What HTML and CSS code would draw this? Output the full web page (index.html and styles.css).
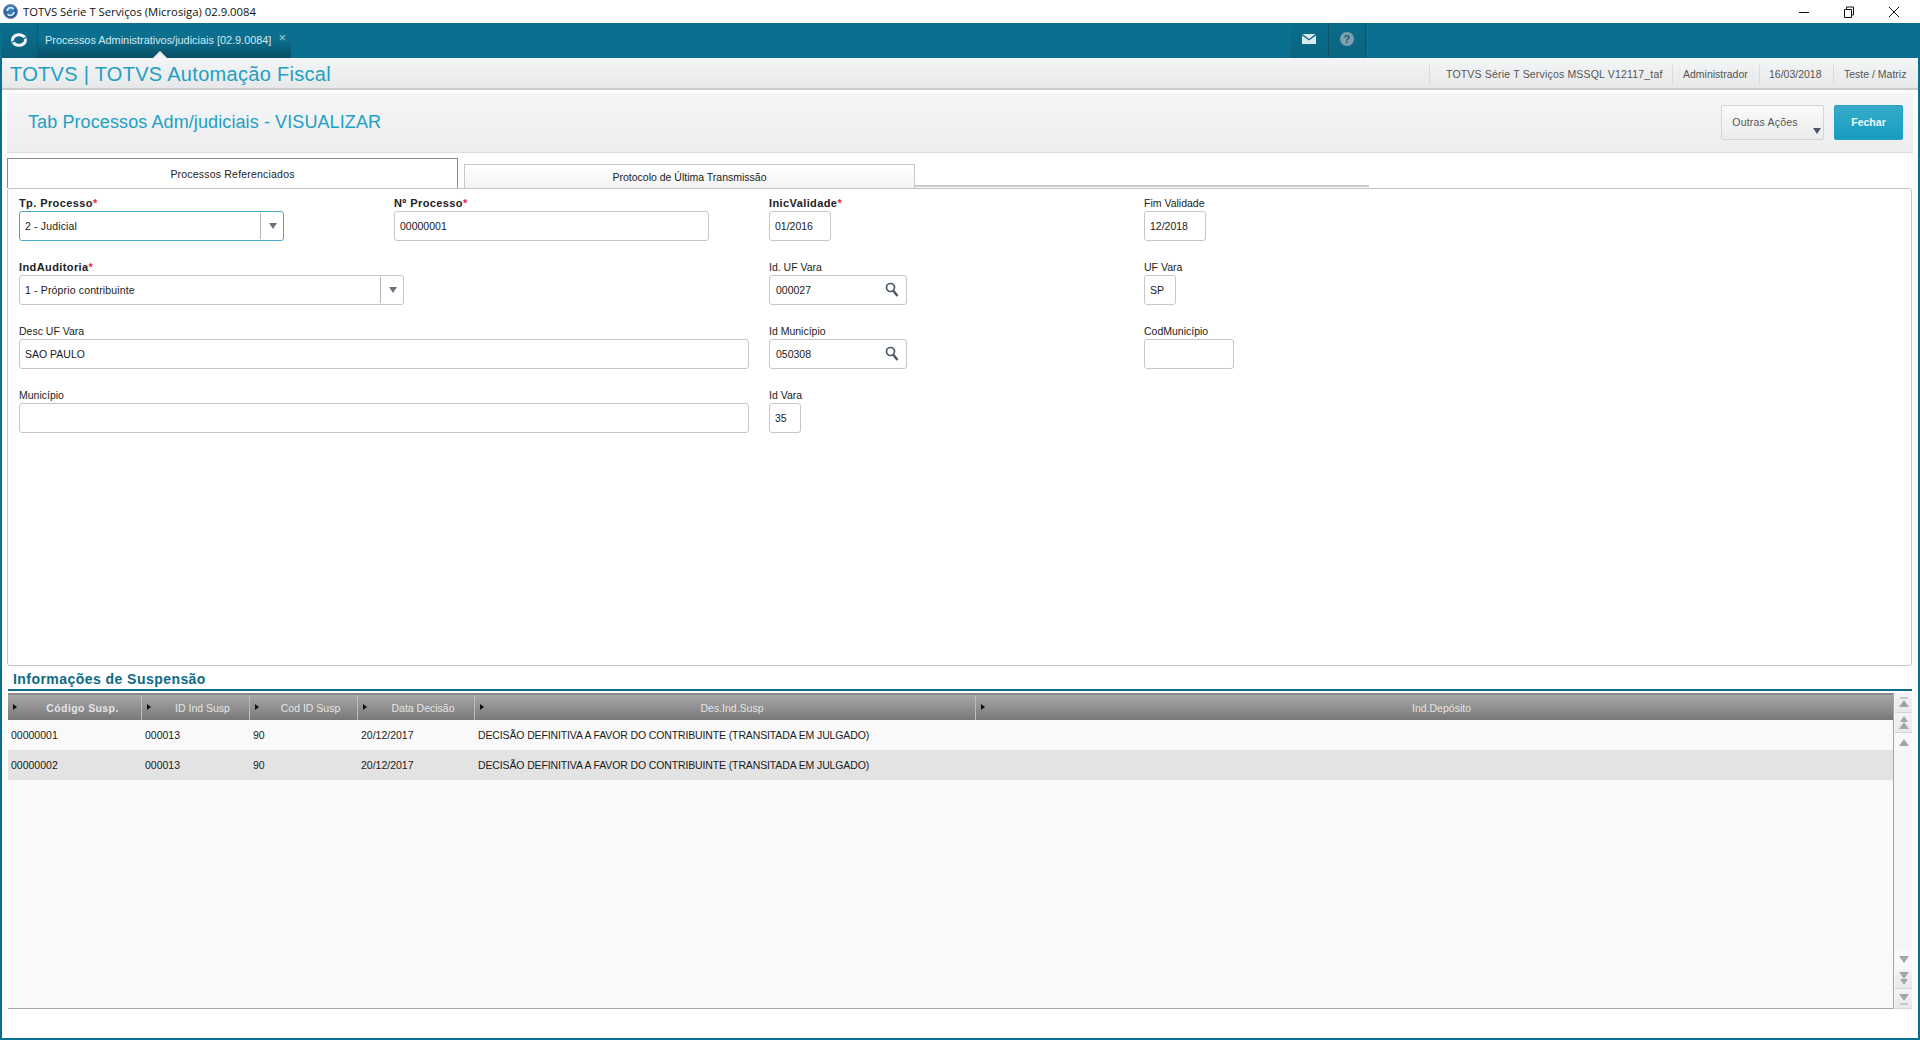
FILE: index.html
```html
<!DOCTYPE html>
<html lang="pt-BR">
<head>
<meta charset="utf-8">
<title>TOTVS Série T Serviços (Microsiga) 02.9.0084</title>
<link rel="stylesheet" href="styles.css">
</head>
<body>
<header class="titlebar">
  <svg class="app-icon" width="15" height="15" viewBox="0 0 15 15"><defs><radialGradient id="ball" cx="50%" cy="35%" r="65%"><stop offset="0" stop-color="#3f8fd0"/><stop offset="1" stop-color="#1d4f86"/></radialGradient></defs><circle cx="7.500" cy="7.500" r="7" fill="url(#ball)" stroke="#7d8ea3"/><path d="M4.200 7a3.500 3.500 0 0 1 6.300-2M10.800 8a3.500 3.500 0 0 1-6.300 2" fill="none" stroke="#d6ecfa" stroke-width="1.800"/></svg>
  <span class="app-title">TOTVS Série T Serviços (Microsiga) 02.9.0084</span>
  <div class="win-controls">
    <svg width="12" height="12" viewBox="0 0 12 12"><path d="M1 6.500h10" stroke="#111" fill="none"/></svg>
    <svg width="12" height="12" viewBox="0 0 12 12"><path d="M1.500 3.500h7v8h-7zM3.500 3.500v-2.500h7v8h-2" stroke="#111" fill="none"/></svg>
    <svg width="12" height="12" viewBox="0 0 12 12"><path d="M1 1l10 10M11 1L1 11" stroke="#111" fill="none"/></svg>
  </div>
</header>
<div class="app">
  <nav class="nav">
    <div class="nav-logo">
      <svg width="16" height="14" viewBox="0 0 16 14"><ellipse cx="8" cy="7" rx="6.500" ry="5.300" fill="none" stroke="#f2f7f9" stroke-width="3"/><path d="M1 9.500C4.500 5 8 9.500 15 4.500" fill="none" stroke="#0b6c8a" stroke-width="1.300"/></svg>
    </div>
    <div class="nav-tab">
      <span>Processos Administrativos/judiciais [02.9.0084]</span>
      <span class="nav-close">×</span>
      <i class="nav-notch"></i>
    </div>
    <div class="nav-spacer"></div>
    <div class="nav-btn"><svg width="14" height="10" viewBox="0 0 14 10"><path d="M.5 0h13L7 5zM0 1.500L7 6.500l7-5V10H0z" fill="#dfeaf0"/></svg></div>
    <div class="nav-btn"><span class="help">?</span></div>
    <div class="nav-end"></div>
  </nav>
  <div class="strip">
    <h1 class="brand">TOTVS | TOTVS Automação Fiscal</h1>
    <ul class="info">
      <li class="info-a">TOTVS Série T Serviços MSSQL V12117_taf</li>
      <li class="info-b">Administrador</li>
      <li class="info-c">16/03/2018</li>
      <li class="info-d">Teste / Matriz</li>
    </ul>
  </div>
  <main class="page">
    <section class="pagehead">
      <h2 class="page-title">Tab Processos Adm/judiciais - VISUALIZAR</h2>
      <div class="actions">
        <button class="btn btn-more">Outras Ações<i class="caret"></i></button>
        <button class="btn btn-primary">Fechar</button>
      </div>
    </section>
    <div class="tabs">
      <div class="tab tab-active">Processos Referenciados</div>
      <div class="tab tab-idle">Protocolo de Última Transmissão</div>
      <div class="tab-line"></div>
    </div>
    <section class="panel">
      <div class="form">
        <div class="field"><label class="req">Tp. Processo<b>*</b></label><div class="input select focus w265"><span>2 - Judicial</span><i class="sel-btn"><i class="caret"></i></i></div></div>
        <div class="field"><label class="req">Nº Processo<b>*</b></label><div class="input w315"><span>00000001</span></div></div>
        <div class="field"><label class="req">InicValidade<b>*</b></label><div class="input w62"><span>01/2016</span></div></div>
        <div class="field"><label>Fim Validade</label><div class="input w62"><span>12/2018</span></div></div>

        <div class="field span2"><label class="req">IndAuditoria<b>*</b></label><div class="input select w385"><span>1 - Próprio contribuinte</span><i class="sel-btn"><i class="caret"></i></i></div></div>
        <div class="field"><label>Id. UF Vara</label><div class="input lookup w138"><span>000027</span><svg width="14" height="15" viewBox="0 0 14 15"><circle cx="5.500" cy="5.500" r="4" fill="none" stroke="#4b5563" stroke-width="1.700"/><path d="M8.500 9l4 5" stroke="#4b5563" stroke-width="2.400"/></svg></div></div>
        <div class="field"><label>UF Vara</label><div class="input w32"><span>SP</span></div></div>

        <div class="field span2"><label>Desc UF Vara</label><div class="input w730"><span>SAO PAULO</span></div></div>
        <div class="field"><label>Id Município</label><div class="input lookup w138"><span>050308</span><svg width="14" height="15" viewBox="0 0 14 15"><circle cx="5.500" cy="5.500" r="4" fill="none" stroke="#4b5563" stroke-width="1.700"/><path d="M8.500 9l4 5" stroke="#4b5563" stroke-width="2.400"/></svg></div></div>
        <div class="field"><label>CodMunicípio</label><div class="input w90"></div></div>

        <div class="field span2"><label>Município</label><div class="input w730"></div></div>
        <div class="field"><label>Id Vara</label><div class="input w32"><span>35</span></div></div>
      </div>
    </section>
    <h3 class="section-title">Informações de Suspensão</h3>
    <section class="browse">
      <div class="grid">
        <div class="row head">
          <div class="th strong"><i class="arrow"></i><span>Código Susp.</span></div>
          <div class="th"><i class="arrow"></i><span>ID Ind Susp</span></div>
          <div class="th"><i class="arrow"></i><span>Cod ID Susp</span></div>
          <div class="th"><i class="arrow"></i><span>Data Decisão</span></div>
          <div class="th"><i class="arrow"></i><span>Des.Ind.Susp</span></div>
          <div class="th"><i class="arrow"></i><span>Ind.Depósito</span></div>
        </div>
        <div class="row body">
          <div>00000001</div><div>000013</div><div>90</div><div>20/12/2017</div><div class="wide">DECISÃO DEFINITIVA A FAVOR DO CONTRIBUINTE (TRANSITADA EM JULGADO)</div><div></div>
        </div>
        <div class="row body alt">
          <div>00000002</div><div>000013</div><div>90</div><div>20/12/2017</div><div class="wide">DECISÃO DEFINITIVA A FAVOR DO CONTRIBUINTE (TRANSITADA EM JULGADO)</div><div></div>
        </div>
      </div>
      <div class="scroll">
        <div class="scroll-group">
          <div class="sb"><svg width="10" height="12" viewBox="0 0 10 12"><path d="M1 1h8" stroke="#a5a5a5"/><path d="M5 3l5 7H0z" fill="#a5a5a5"/></svg></div>
          <div class="sb"><svg width="10" height="13" viewBox="0 0 10 13"><path d="M5 0l4 6H1zM5 6l5 7H0z" fill="#a5a5a5"/></svg></div>
          <div class="sb sb-on"><svg width="10" height="8" viewBox="0 0 10 8"><path d="M5 0l5 7H0z" fill="#a5a5a5"/></svg></div>
        </div>
        <div class="scroll-group">
          <div class="sb sb-on"><svg width="10" height="8" viewBox="0 0 10 8"><path d="M0 1h10L5 8z" fill="#a5a5a5"/></svg></div>
          <div class="sb"><svg width="10" height="13" viewBox="0 0 10 13"><path d="M0 0h10L5 7zM1 7h8l-4 6z" fill="#a5a5a5"/></svg></div>
          <div class="sb"><svg width="10" height="12" viewBox="0 0 10 12"><path d="M0 1h10L5 8z" fill="#a5a5a5"/><path d="M1 11h8" stroke="#a5a5a5"/></svg></div>
        </div>
      </div>
    </section>
  </main>
</div>
</body>
</html>
```
FILE: styles.css
```css
* { box-sizing: border-box; }
html, body { margin: 0; height: 100%; }
body {
  width: 1920px;
  height: 1040px;
  overflow: hidden;
  background: #fff;
  color: #1a1a1a;
  font-family: "Liberation Sans", Arial, sans-serif;
  font-size: 10.5px;
  display: flex;
  flex-direction: column;
}
h1, h2, h3, ul { margin: 0; padding: 0; font-weight: normal; list-style: none; }
i { font-style: normal; display: block; }

/* window title bar */
.titlebar { height: 23px; display: flex; align-items: center; padding-left: 3px; flex: none; }
.app-title { margin-left: 5px; font-family: "Open Sans", sans-serif; font-size: 11.3px; color: #111; }
.win-controls { margin-left: auto; display: flex; gap: 33px; padding-right: 20px; }

/* application frame */
.app {
  height: 1017px;
  display: flex;
  flex-direction: column;
  border: solid #0b708f;
  border-width: 0 2px 2px;
}
.nav { height: 35px; flex: none; display: flex; background: #0b708f; }
.nav-logo {
  width: 36px;
  display: flex; align-items: center; justify-content: center;
  padding: 0 2px 1px 0;
  background: linear-gradient(#0b708f, #0a6079);
  border-right: 1px solid #0a5a72;
}
.nav-tab {
  width: 253px;
  position: relative;
  display: flex; align-items: center;
  padding: 0 0 1px 7px;
  color: #d6e6ec;
  font-size: 10.9px;
  background: linear-gradient(#0b708f 45%, #0a4f66);
}
.nav-close { margin-left: 7px; color: #a9c6d1; font-size: 13px; line-height: 10px; padding-bottom: 5px; }
.nav-notch {
  position: absolute; left: 115px; bottom: 0;
  border: 7px solid transparent; border-top: 0;
  border-bottom-color: #eef0f2;
}
.nav-spacer { flex: 1; }
.nav-btn {
  width: 37.500px;
  display: flex; align-items: center; justify-content: center;
  padding-bottom: 3px;
  background: linear-gradient(#0a6d8a, #0a6580);
  border-right: 1px solid #0c5468;
}
.nav-btn:first-of-type { border-left: 1px solid #0c5f78; }
.help {
  width: 14px; height: 14px; border-radius: 50%;
  background: #7f9fad; color: #0b5f78;
  font: bold 11px/14px "Liberation Sans", sans-serif;
  text-align: center;
}
.nav-end { width: 552px; }

/* system strip */
.strip {
  height: 32px; flex: none;
  display: flex; align-items: center; justify-content: space-between;
  padding-top: 2px;
  background: linear-gradient(#f4f5f6, #e6e8ea);
  border-bottom: 2px solid #c8cacc;
}
.brand { margin-left: 8px; font-size: 20px; color: #1ea0c3; letter-spacing: .3px; }
.info { display: flex; height: 100%; align-items: center; color: #555; font-size: 10.5px; }
.info li { height: 19px; line-height: 19px; border-left: 1px solid #d8dadc; }
.info-a { width: 243px; padding-left: 16px; letter-spacing: .18px; }
.info-b { width: 87px; padding-left: 10px; }
.info-c { width: 74px; padding-left: 9px; }
.info-d { width: 85px; padding-left: 10px; }

/* page */
.page { flex: 1; display: flex; flex-direction: column; padding: 3px 3px 29px 5px; background: #fff; min-height: 0; }
.pagehead {
  height: 60px; flex: none;
  display: flex; align-items: center; justify-content: space-between;
  padding: 0 10px 0 21px;
  margin-right: 2px;
  background: linear-gradient(#f4f5f5, #edeef0);
  border-bottom: 1px solid #dcdcdc;
  border-radius: 3px 3px 0 0;
}
.page-title { font-size: 18px; color: #1ea0c3; letter-spacing: .1px; }
.actions { display: flex; gap: 10px; }
.btn {
  height: 35px;
  font-family: "Liberation Sans", sans-serif; font-size: 10.5px;
  border-radius: 2px; border: 1px solid #d4d4d4; padding: 0 0 2px;
}
.btn-more {
  width: 103px;
  position: relative;
  color: #555;
  background: linear-gradient(#fafafa, #ebeced);
  padding-right: 15px;
  letter-spacing: .2px;
}
.btn-more .caret { position: absolute; right: 2px; bottom: 5px; border-top-color: #4b5563; }
.btn-primary {
  width: 69px;
  color: #f2fafc;
  font-weight: bold;
  border-color: #2aa0c0;
  background: linear-gradient(#38abc9, #169cc0);
}
.caret { width: 0; height: 0; border: 4.500px solid transparent; border-bottom: 0; border-top: 6px solid #6b7280; }

/* tabs */
.tabs { height: 30px; flex: none; margin-top: 5px; display: flex; align-items: flex-end; }
.tab { display: flex; align-items: center; justify-content: center; border: 1px solid; border-bottom: 0; }
.tab-active { width: 451px; height: 30px; background: #fff; border-color: #8a8a8a; color: #222; padding-top: 1px; letter-spacing: .2px; }
.tab-idle {
  width: 451px; height: 24px; margin-left: 6px;
  background: linear-gradient(#fff, #f3f3f3);
  border-color: #c8c8c8; color: #222; padding-top: 1px;
}
.tab-line { width: 454px; height: 2px; margin-bottom: 1px; background: #cbcbcb; }

/* form */
.panel {
  height: 478px; flex: none;
  margin-right: 3px;
  border: 1px solid #c4c4c4;
  border-radius: 3px;
  padding: 6px 0 0 11px;
  background: #fff;
}
.form { display: grid; grid-template-columns: repeat(4, 375px); row-gap: 18px; }
.field { display: flex; flex-direction: column; }
.span2 { grid-column: span 2; }
label { height: 16px; line-height: 16px; color: #222; }
label.req { font-weight: bold; font-size: 11px; letter-spacing: .4px; color: #222; }
label b { color: #e8283a; }
.input {
  height: 30px;
  display: flex; align-items: center;
  padding-left: 5px;
  border: 1px solid #c6c6c6;
  border-radius: 3px;
  color: #1a1a1a;
  background: #fff;
}
.focus { border-color: #47a9c7; }
.select { padding-right: 0; justify-content: space-between; letter-spacing: .15px; }
.sel-btn {
  width: 23px; height: 26px;
  display: flex; align-items: center; justify-content: center;
  padding-left: 2px;
  border-left: 1px solid #b5b5b5;
}
.lookup { justify-content: space-between; padding: 0 7px 0 6px; }
.lookup svg { margin-bottom: 2px; }
.w32 { width: 32px; }
.w62 { width: 62px; }
.w90 { width: 90px; }
.w138 { width: 138px; }
.w265 { width: 265px; }
.w315 { width: 315px; }
.w385 { width: 385px; }
.w730 { width: 730px; }

/* section heading */
.section-title {
  height: 25px; flex: none;
  margin: 0 3px 0 1px;
  padding: 5px 0 0 5px;
  font-size: 14px; font-weight: bold; line-height: 16px;
  letter-spacing: .45px;
  color: #0d6a85;
  border-bottom: 2px solid #0c6c86;
}

/* data grid */
.browse { flex: 1; display: flex; margin: 2px 3px 0 1px; min-height: 0; }
.grid {
  width: 1886px;
  background: #f9f9f9;
  border-right: 1px solid #a5a5a5;
  border-bottom: 1px solid #a5a5a5;
}
.row { display: grid; grid-template-columns: 134px 108px 108px 117px 501px 917px; }
.head { height: 27px; border-top: 2px solid #8a8a8a; background: linear-gradient(#a8a8a8, #787878); }
.th {
  position: relative;
  display: flex; align-items: center; justify-content: center;
  padding-left: 14px;
  color: #e4e4e4;
  border-right: 1px solid #bdbdbd;
}
.th:last-child { border-right: 0; }
.th.strong { font-weight: bold; padding-left: 16px; letter-spacing: .4px; }
.th .arrow {
  position: absolute; left: 5px; top: 9px;
  border: 3.500px solid transparent; border-right: 0;
  border-left: 4px solid #111;
}
.body { height: 30px; line-height: 30px; }
.body > div { padding-left: 3px; white-space: nowrap; }
.body > .wide { letter-spacing: -.13px; }
.alt { background: #e3e3e3; }

/* scroll column */
.scroll {
  width: 20px;
  display: flex; flex-direction: column; justify-content: space-between;
  background: #f6f6f9;
}
.sb {
  height: 20px;
  display: flex; align-items: center; justify-content: center;
  background: linear-gradient(#f4f4f6, #e9e9ec);
  border-bottom: 1px solid #d6d6d6;
  margin-left: 1px;
}
.sb-on { background: #f8f8fa; border: 0; }
```
